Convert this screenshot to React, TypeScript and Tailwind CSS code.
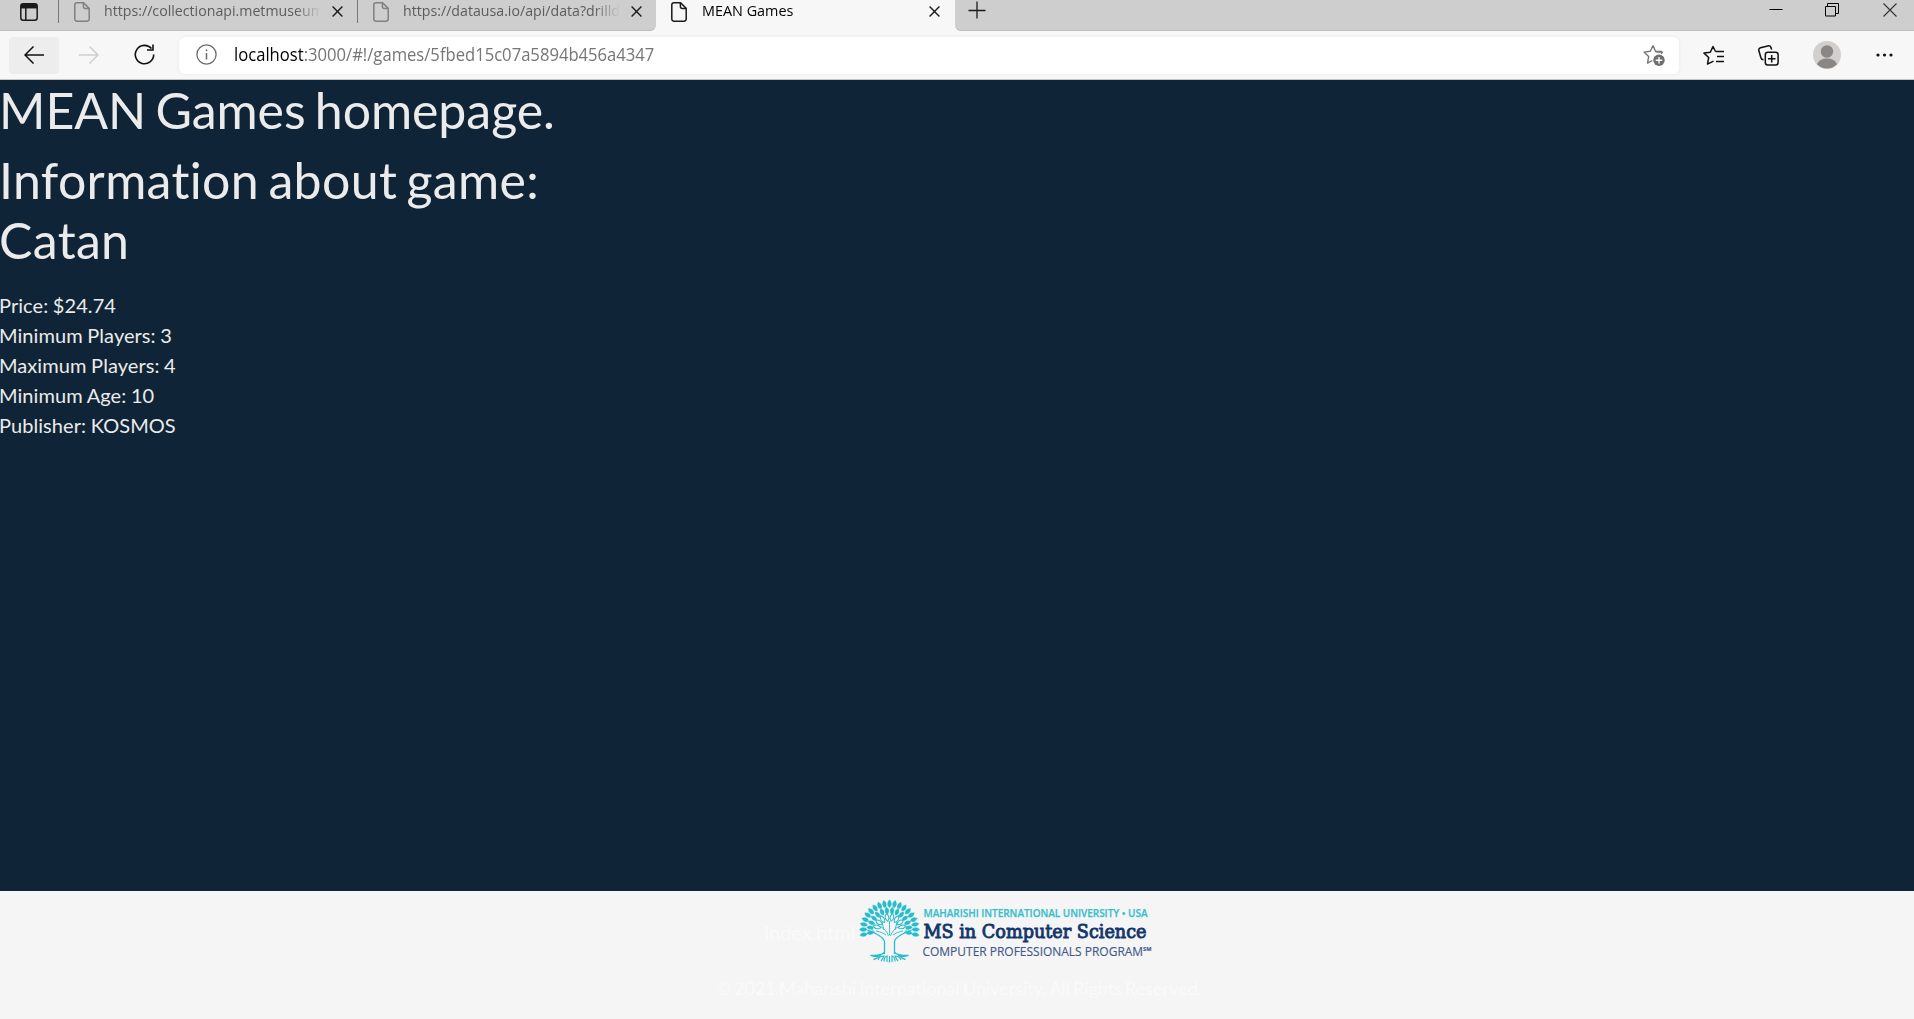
import React from 'react';

const DocIcon = ({ className }: { className: string }) => (
  <svg width="16" height="20" viewBox="0 0 16 20" fill="none" stroke="currentColor" strokeWidth="1.5" className={className}>
    <path d="M3 .8h6.6L15.2 6.4V17a2.2 2.2 0 0 1-2.2 2.2H3A2.2 2.2 0 0 1 .8 17V3A2.2 2.2 0 0 1 3 .8Z" />
    <path d="M9.4 1v3.6a2 2 0 0 0 2 2H15" />
  </svg>
);

const CloseIcon = () => (
  <svg width="11" height="11" viewBox="0 0 11 11" fill="none" stroke="#1a1a1a" strokeWidth="1.4" className="shrink-0">
    <path d="M.6.6l9.8 9.8M10.4.6L.6 10.4" />
  </svg>
);

const StarPath = 'M10 1.5l2.6 6h6.2M10 1.5L7.3 7.3 1 8.1l4.7 4.4-1.2 6.6 4.8-2.6';

const leaf = (len: number, w: number) =>
  `M0 0C${w} ${-len * 0.3} ${w} ${-len * 0.65} 0 ${-len}C${-w} ${-len * 0.65} ${-w} ${-len * 0.3} 0 0Z`;

const rings = [
  { r: 22, count: 19, spread: 100, len: 8.5, w: 3, filled: true },
  { r: 15.5, count: 14, spread: 98, len: 8, w: 2.9, filled: true },
  { r: 9, count: 8, spread: 76, len: 8, w: 2.4, filled: false },
];

const Tree = () => (
  <g stroke="#27bccb" fill="none" strokeWidth="0.9">
    {rings.map((ring) =>
      Array.from({ length: ring.count }, (_, i) => {
        const a = -ring.spread + (2 * ring.spread * i) / (ring.count - 1);
        return (
          <path
            key={`${ring.r}-${i}`}
            d={leaf(ring.len, ring.w)}
            fill={ring.filled ? '#27bccb' : 'none'}
            stroke={ring.filled ? '#f5f5f5' : '#27bccb'}
            strokeWidth={ring.filled ? 0.3 : 1}
            transform={`translate(30.5 31) rotate(${a}) translate(0 ${-ring.r})`}
          />
        );
      }),
    )}
    <path d="M25.5 55V43c0-3-4-6-9-8.5l-8-3.5M35.5 55V43c0-3 4-6 9-8.500l8-3.500" strokeWidth="1.3" />
    <path d="M30.5 36v-14M29.5 37c-1-4-4-7-8-9.5M31.5 37c1-4 4-7 8-9.5M27 36c-3-2-5-3-10-4M34 36c3-2 5-3 10-4M25 31l-2-8M36 31l2-8M12 29l4 5M49 29l-4 5" />
    <path d="M25.5 53c-1 2.500-8 3.500-14 3.500 3 1 6 1 9 .5-2 2-4 3-6 3.500M35.500 53c1 2.500 8 3.500 14 3.500-3 1-6 1-9 .5 2 2 4 3 6 3.500" strokeWidth="1.3" />
    <path d="M19 61c1-3 4-4 6-4-1 2-2 4-3 5M25 62.500c0-3 1-5 3-5.500v6M42 61c-1-3-4-4-6-4 1 2 2 4 3 5M36 62.500c0-3-1-5-3-5.500v6M30.500 57v6.500" strokeWidth="1.2" />
  </g>
);

const Logo = () => (
  <svg width="296" height="66" viewBox="0 0 296 66" className="shrink-0">
    <Tree />
    <text x="64.5" y="18" fontFamily="Open Sans, sans-serif" fontSize="10.8" fontWeight="600" fill="#35bfcd" stroke="#35bfcd" strokeWidth="0.25" textLength="224" lengthAdjust="spacingAndGlyphs">
      MAHARISHI INTERNATIONAL UNIVERSITY • USA
    </text>
    <text x="64.5" y="39" fontFamily="DejaVu Serif, serif" fontSize="18.6" fill="#11366c" stroke="#11366c" strokeWidth="0.9" textLength="223" lengthAdjust="spacingAndGlyphs">
      MS in Computer Science
    </text>
    <text x="63.5" y="57" fontFamily="Open Sans, sans-serif" fontSize="12.8" fill="#42588c" stroke="#42588c" strokeWidth="0.15" textLength="229" lengthAdjust="spacingAndGlyphs">
      COMPUTER PROFESSIONALS PROGRAM<tspan dy="-5" fontSize="6" fontWeight="700">SM</tspan>
    </text>
  </svg>
);

const InactiveTab = ({ title }: { title: string }) => (
  <div className="flex h-[23px] w-[299px] items-center border-l border-[#777] pl-[15px]">
    <DocIcon className="shrink-0 text-[#808080]" />
    <span className="-mt-[3px] ml-[14px] w-[217px] shrink-0 overflow-hidden whitespace-nowrap [mask-image:linear-gradient(to_right,black_88%,transparent)]">
      <span className="inline-block origin-left scale-x-[0.945] text-[#5c5c5c]">{title}</span>
    </span>
    <span className="ml-[11px]"><CloseIcon /></span>
  </div>
);

const TabStrip = () => (
  <div className="flex h-[31px] bg-[#f7f7f7] text-[15px] leading-[22px]">
    <div className="flex w-[656px] items-start rounded-br-md border-b border-[#bcbcbc] bg-[#cecece]">
      <div className="flex h-[23px] w-[58px] items-center pl-5">
        <svg width="18" height="18" viewBox="0 0 18 18" fill="none" stroke="#1a1a1a" strokeWidth="1.5">
          <rect x=".8" y=".8" width="16.4" height="16.4" rx="2.5" />
          <path d="M1 3.2h16" strokeWidth="4.5" />
          <path d="M5.8 4v13" />
        </svg>
      </div>
      <InactiveTab title="https://collectionapi.metmuseum.org" />
      <InactiveTab title="https://datausa.io/api/data?drilldowns" />
    </div>
    <div className="flex h-[23px] w-[299px] items-center pl-[15px]">
      <DocIcon className="shrink-0 text-[#1a1a1a]" />
      <span className="-mt-[3px] ml-[15px] w-[217px] shrink-0">
        <span className="inline-block origin-left scale-x-[0.96] text-black">MEAN Games</span>
      </span>
      <span className="ml-[10px]"><CloseIcon /></span>
    </div>
    <div className="flex flex-1 items-start rounded-bl-md border-b border-[#bcbcbc] bg-[#cecece] pl-[13px]">
      <svg width="18" height="18" viewBox="0 0 18 18" stroke="#1a1a1a" strokeWidth="1.3" className="mt-px">
        <path d="M9 .5v17M.5 9.5h17" />
      </svg>
      <svg width="14" height="14" viewBox="0 0 14 14" stroke="#000" className="mt-[3px] ml-auto">
        <path d="M.5 6.500h13" />
      </svg>
      <svg width="14" height="14" viewBox="0 0 14 14" stroke="#000" fill="none" className="mt-[3px] ml-[42px]">
        <path d="M.5 3.500h10v9.500h-10zM2.500 3.500v-3h11v10h-3" />
      </svg>
      <svg width="14" height="14" viewBox="0 0 14 14" stroke="#333" strokeWidth="1.1" className="mt-[3px] mr-[17px] ml-[44px]">
        <path d="M.5.5l13 13M13.500.5l-13 13" />
      </svg>
    </div>
  </div>
);

const Toolbar = () => (
  <div className="flex h-[49px] items-center border-b border-[#c4c4c4] bg-[#f7f7f7]">
    <div className="ml-[9px] flex h-[37px] w-[50px] items-center justify-center rounded bg-[#ededed]">
      <svg width="20" height="18" viewBox="0 0 20 18" fill="none" stroke="#111" strokeWidth="1.5" className="-mt-px"><path d="M20 9H1M9.500.5L1 9l8.500 8.500" /></svg>
    </div>
    <svg width="20" height="18" viewBox="0 0 20 18" fill="none" stroke="#cfcfcf" strokeWidth="1.5" className="-mt-px ml-[20px]"><path d="M0 9h19M10.500.5L19 9l-8.500 8.500" /></svg>
    <svg width="21" height="21" viewBox="0 0 21 21" fill="none" stroke="#111" strokeWidth="1.6" className="-mt-px ml-[35px]">
      <path d="M17.500 4.600A9.200 9.200 0 1 0 19.700 10.500M19 .5v5.500h-6" />
    </svg>
    <div className="ml-[24px] flex h-[37px] w-[1500px] items-center rounded-md bg-white pr-[13px] pl-[17px] shadow-[0_0_4px_rgba(0,0,0,0.06)]">
      <svg width="21" height="21" viewBox="0 0 21 21" fill="none" stroke="#6b6b6b" strokeWidth="1.3" className="-mt-px">
        <circle cx="10.500" cy="10.500" r="9.600" />
        <path d="M10.500 9v6.500M10.500 5.500v1.700" strokeWidth="1.500" />
      </svg>
      <span className="-mt-[2px] ml-[17px] inline-block origin-left scale-x-[0.95] text-[17.5px] whitespace-nowrap text-[#767676]">
        <span className="text-black">localhost</span>:3000/#!/games/5fbed15c07a5894b456a4347
      </span>
      <svg width="23" height="22" viewBox="0 0 23 22" fill="none" stroke="#757575" strokeWidth="1.4" strokeLinejoin="round" className="ml-auto">
        <path d={StarPath} />
        <path d="M12.600 7.500l6.900.8-1.500 1.500" />
        <circle cx="16" cy="16.300" r="5.700" fill="#6e6e6e" stroke="none" />
        <path d="M16 13v6.600M12.700 16.300h6.600" stroke="#fff" />
      </svg>
    </div>
    <svg width="22" height="21" viewBox="0 0 22 21" fill="none" stroke="#111" strokeWidth="1.5" strokeLinejoin="round" className="ml-[24px]">
      <path d="M12.500 6.500h8.500M14 11.500h7M13 16.500h8M12.500 6.500L10 1.500 7.300 7.300 1 8.100l4.700 4.400-1.200 6.600 6-3" />
    </svg>
    <svg width="21" height="21" viewBox="0 0 21 21" fill="none" stroke="#111" strokeWidth="1.5" className="ml-[33px]">
      <rect x="7.300" y="7.300" width="12.800" height="12.800" rx="2.500" />
      <path d="M13.700 10v7.500M10 13.700h7.500M5.500 14.800c-1.600 0-2.200-.5-2.600-2L.9 5.800c-.4-1.500.2-2.600 1.600-3L9.800.9c1.600-.4 2.700.2 3.200 1.700l.6 2" />
    </svg>
    <svg width="28" height="28" viewBox="0 0 28 28" className="ml-[34px]">
      <circle cx="14" cy="14" r="14" fill="#d2d0ce" />
      <circle cx="14" cy="10.500" r="6.200" fill="#8a8683" />
      <path d="M4 23.200c1.500-3.700 5.300-5.700 10-5.700s8.500 2 10 5.700A14 14 0 0 1 4 23.200Z" fill="#8a8683" />
    </svg>
    <svg width="17" height="4" viewBox="0 0 17 4" fill="#111" className="ml-[35px]">
      <circle cx="2" cy="2" r="1.600" /><circle cx="8.500" cy="2" r="1.600" /><circle cx="15" cy="2" r="1.600" />
    </svg>
  </div>
);

const details = ['Price: $24.74', 'Minimum Players: 3', 'Maximum Players: 4', 'Minimum Age: 10', 'Publisher: KOSMOS'];

export default function App() {
  return (
    <div className="flex h-[1019px] w-[1914px] flex-col overflow-hidden bg-[#0f2537] font-['Lato',sans-serif] [font-variant-ligatures:none]">
      <header className="shrink-0 font-['Open_Sans',sans-serif]">
        <TabStrip />
        <Toolbar />
      </header>
      <main className="flex-1 text-[20px] leading-[30px] text-[#ebebeb]">
        <h1 className="mb-[10px] -ml-px text-[50px] leading-[60px] tracking-[-0.05px] [word-spacing:-3.5px]">MEAN Games homepage.</h1>
        <h1 className="mb-[20px] -ml-px text-[50px] leading-[60px] tracking-[0.35px] [word-spacing:-3.8px]">Information about game:<br />Catan</h1>
        <div className="-ml-px tracking-[0.06px] [word-spacing:-0.5px]">
          {details.map((line) => <p key={line}>{line}</p>)}
        </div>
      </main>
      <footer className="flex h-[128px] shrink-0 flex-col items-center bg-[#f5f5f5] text-[20px] leading-[30px] text-[#fafafa]">
        <div className="mt-[8px] flex pl-[5px]">
          <a className="mt-[18px] mr-[4px] tracking-[-0.1px]">Index.html</a>
          <Logo />
        </div>
        <p className="mt-[8px] pl-[4px] text-[18px] [word-spacing:-1.5px]">© 2021 Maharishi International University. All Rights Reserved.</p>
      </footer>
    </div>
  );
}
